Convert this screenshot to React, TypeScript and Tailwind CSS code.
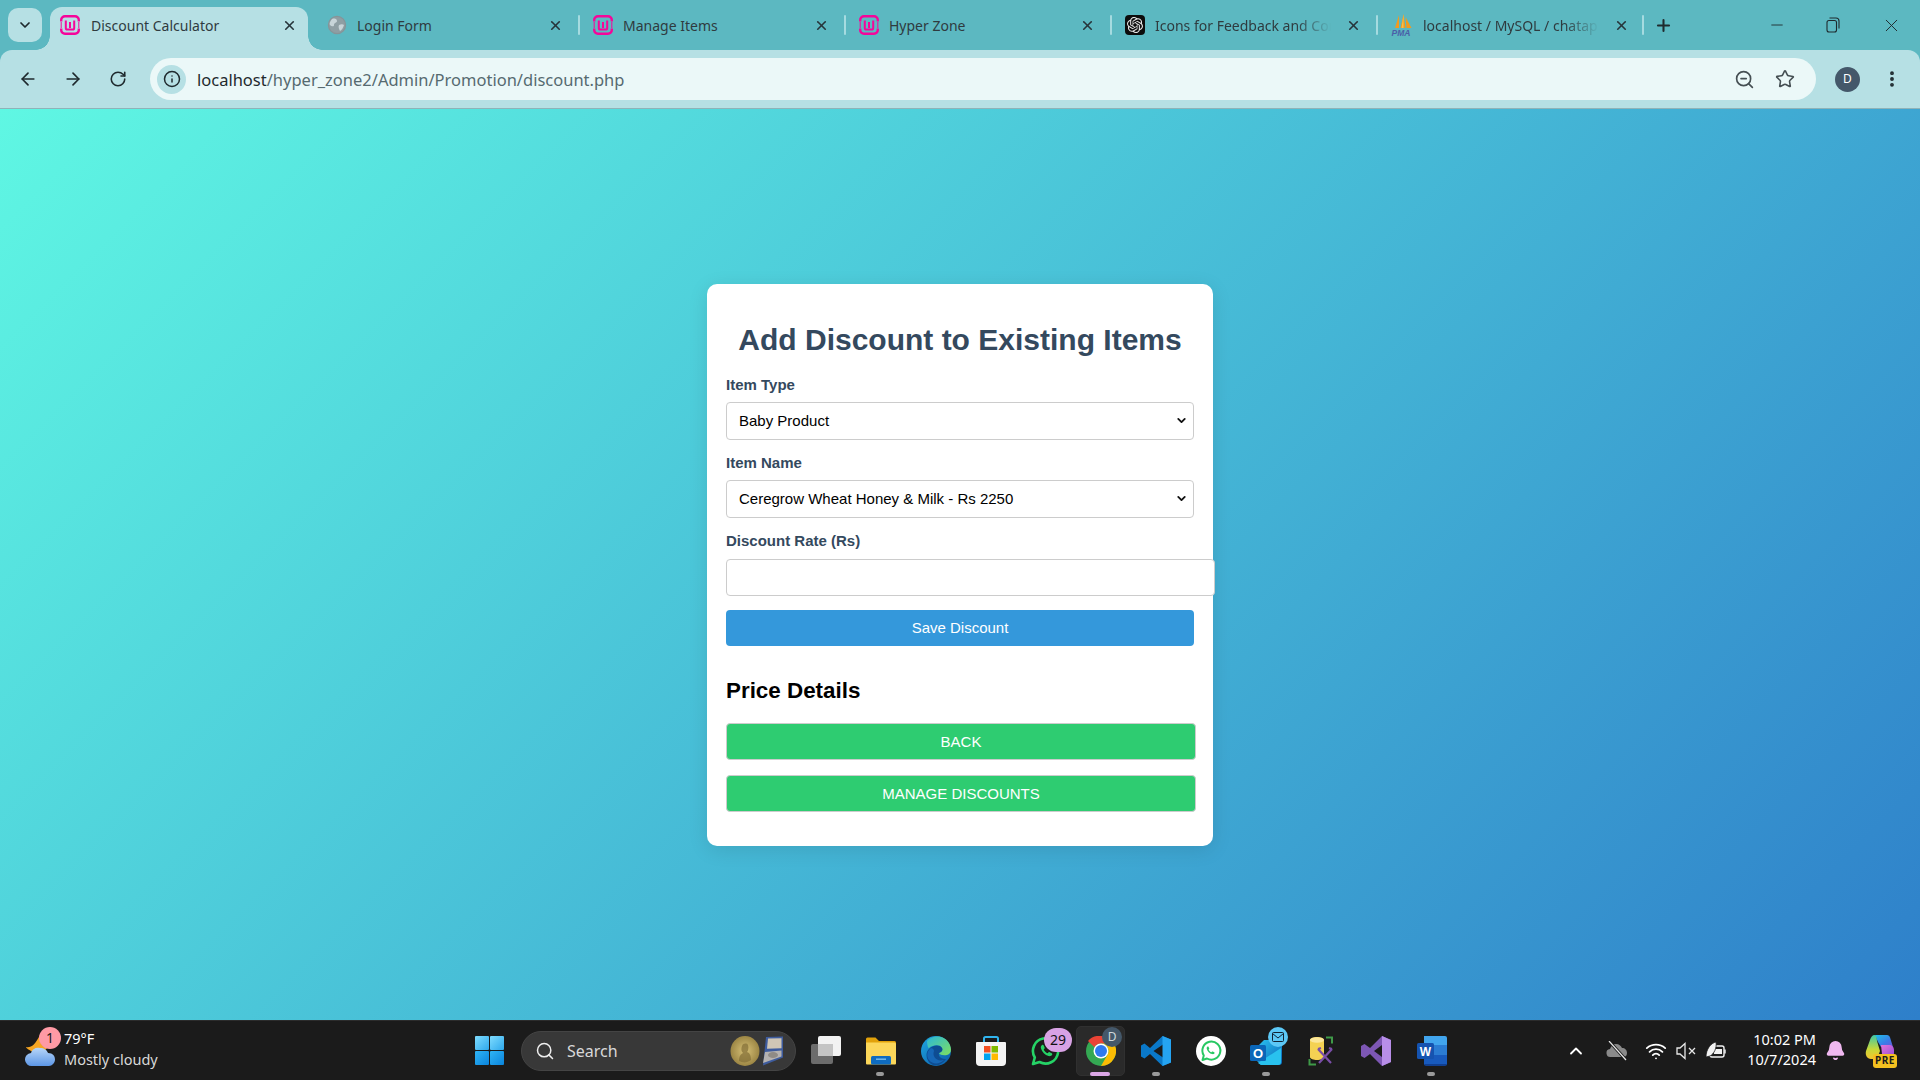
import React from "react";
import { ArrowLeft, ArrowRight, RotateCw, Info, ZoomOut, Star, EllipsisVertical, ChevronDown, ChevronUp, X, Plus, Minus, Search, Wifi, Bell } from "lucide-react";
import { SiOpenai } from "react-icons/si";

const ui = "font-['Noto_Sans','Open_Sans',sans-serif]";

function Wamp() {
  return (
    <svg width="20" height="20" viewBox="0 0 20 20" fill="none" className="shrink-0">
      <path d="M1.2 6.5V5a3.8 3.8 0 0 1 3.8-3.8h10A3.8 3.8 0 0 1 18.8 5v1.5M1.2 13.5V15A3.8 3.8 0 0 0 5 18.8h10a3.8 3.8 0 0 0 3.8-3.8v-1.5" stroke="#f5069a" strokeWidth="2.4" />
      <path d="M1.2 7v6M18.8 7v6" stroke="#f5069a" strokeWidth="1" />
      <path d="M5.8 5.5v7.5a1.6 1.6 0 0 0 1.6 1.6h5.2a1.6 1.6 0 0 0 1.6-1.6V5.5M10 7v6" stroke="#f5069a" strokeWidth="2" />
    </svg>
  );
}

function Globe() {
  return (
    <svg width="20" height="20" viewBox="0 0 20 20" className="shrink-0">
      <circle cx="10" cy="10" r="8.6" fill="#8f9ea3" stroke="#869498" strokeWidth="1.2" />
      <path d="M5 4c3-1 5 0 5 2s-3 1.500-3 4-3 1-4 0 0-4 2-6zM12 10c2-1 4-1 5 0-1 3-2 5-4 6-1-2-2-4-1-6z" fill="#c8d4d8" />
    </svg>
  );
}

function Pma() {
  return (
    <svg width="22" height="24" viewBox="0 0 22 24" className="shrink-0">
      <path d="M4 15 8 2v13zM9.500 15 12.500 1l2 14zM15.500 15 14.500 4l6 11z" fill="#f39a1e" />
      <path d="M10.500 15 12.500 1v14z" fill="#f7c04a" />
      <text x="0.500" y="22.500" fontSize="8.500" fontWeight="700" fontStyle="italic" fill="#4a5fa8" fontFamily="Liberation Sans">PMA</text>
    </svg>
  );
}

function OpenAi() {
  return (
    <span className="flex h-[20px] w-[20px] shrink-0 items-center justify-center rounded-[4px] bg-[#0c0c0c]">
      <SiOpenai size={16} color="#e8e8e8" />
    </span>
  );
}

function Tab({ icon, title, active, fade, sep = true }: { icon: React.ReactNode; title: string; active?: boolean; fade?: boolean; sep?: boolean }) {
  return (
    <div className={`relative flex h-[43px] shrink-0 items-center pb-[7px] ${active ? "mr-[8px] w-[258px] rounded-t-[12px] bg-[#b6e0e4] pl-[10px]" : "w-[266px] pl-[11px]"}`}>
      {active && <span className="absolute bottom-0 right-full h-[14px] w-[14px] bg-[radial-gradient(circle_at_0_0,transparent_13.500px,#b6e0e4_14px)]" />}
      {active && <span className="absolute bottom-0 left-full h-[14px] w-[14px] bg-[radial-gradient(circle_at_100%_0,transparent_13.500px,#b6e0e4_14px)]" />}
      {icon}
      <span className={`w-[176px] overflow-hidden whitespace-nowrap text-[14px] text-[#2f3b3f] ${active ? "ml-[11px]" : "ml-[10px]"} ${ui} ${fade ? "[mask-image:linear-gradient(to_right,black_80%,transparent)]" : ""}`}>{title}</span>
      <span className="ml-[14px] flex h-[16px] w-[16px] items-center justify-center">
        <X size={15} strokeWidth={2.6} color="#27343a" />
      </span>
      {sep && !active && <span className="absolute left-[262px] top-[8px] h-[20px] w-[2px] rounded bg-[#a5dbe0]" />}
    </div>
  );
}

function Tabs() {
  return (
    <div className="flex h-[50px] items-end bg-[#5cb8c1] pl-[8px]">
      <div className="mb-[8px] mr-[8px] flex h-[34px] w-[34px] shrink-0 items-center justify-center rounded-[10px] bg-[#b6e0e4]">
        <ChevronDown size={16} strokeWidth={2.6} color="#1f2a2e" />
      </div>
      <Tab active icon={<Wamp />} title="Discount Calculator" />
      <Tab icon={<Globe />} title="Login Form" />
      <Tab icon={<Wamp />} title="Manage Items" />
      <Tab icon={<Wamp />} title="Hyper Zone" />
      <Tab icon={<OpenAi />} fade title="Icons for Feedback and Comments" />
      <Tab icon={<Pma />} fade title="localhost / MySQL / chatapp" />
      <div className="flex h-[50px] w-[34px] shrink-0 items-center justify-center">
        <Plus size={19} strokeWidth={2.6} color="#1f2a2e" />
      </div>
      <div className="flex-1" />
      <div className="flex h-[50px] items-center pr-[1px]">
        <div className="flex w-[56px] justify-center"><Minus size={18} strokeWidth={1.2} color="#1f2a2e" /></div>
        <div className="mr-[2px] flex w-[56px] justify-center">
          <svg width="14" height="16" viewBox="0 0 14 16" fill="none" stroke="#1f2a2e" strokeWidth="1.100"><rect x="1" y="3.500" width="9.500" height="11.500" rx="2" /><path d="M3.500 1h6.500a3 3 0 0 1 3 3v7.500" /></svg>
        </div>
        <div className="flex w-[56px] justify-center"><X size={21} strokeWidth={1.1} color="#1f2a2e" /></div>
      </div>
    </div>
  );
}

function Toolbar() {
  const nav = "flex w-[45px] items-center justify-center";
  return (
    <div className="bg-[#5cb8c1]">
      <div className="flex h-[59px] items-center rounded-t-[12px] border-b border-[#8fb3b8] bg-[#b6e0e4] pl-[5px]">
        <div className={nav}><ArrowLeft size={20} strokeWidth={2} color="#1f2a2e" /></div>
        <div className={nav}><ArrowRight size={20} strokeWidth={2} color="#1f2a2e" /></div>
        <div className={nav}><RotateCw size={18} strokeWidth={2.1} color="#1f2a2e" /></div>
        <div className="ml-[10px] flex h-[42px] flex-1 items-center rounded-full bg-[#ebf8f8] pl-[7px] pr-[11px]">
          <span className="flex h-[29px] w-[29px] items-center justify-center rounded-full bg-[#b6e0e4]"><Info size={18} strokeWidth={2} color="#1f2a2e" /></span>
          <span className={`ml-[11px] whitespace-nowrap pt-[2px] text-[16.500px] text-[#1f2a2e] ${ui}`}>localhost<span className="text-[#566a70]">/hyper_zone2/Admin/Promotion/discount.php</span></span>
          <span className="flex-1" />
          <span className="mr-[1px] flex w-[40px] justify-center"><ZoomOut size={21} strokeWidth={1.9} color="#454f53" /></span>
          <span className="flex w-[40px] justify-center"><Star size={20} strokeWidth={1.9} color="#454f53" /></span>
        </div>
        <div className="flex w-[104px] items-center pl-[19px]">
          <span className={`flex h-[25px] w-[25px] items-center justify-center rounded-full bg-[#44586a] text-[12px] text-white ${ui}`}>D</span>
          <span className="ml-[17px] flex w-[30px] justify-center"><EllipsisVertical size={20} strokeWidth={2.6} color="#1f2a2e" /></span>
        </div>
      </div>
    </div>
  );
}

const field = "block rounded-[4px] border border-[#ccc] bg-white text-[15px] text-black";
const label = "block text-[15px] font-bold leading-[16px] text-[#34495e]";

function Select({ children }: { children: React.ReactNode }) {
  return (
    <div className="relative w-[468px]">
      <select className={`${field} h-[38px] w-full appearance-none pl-[12px] pr-[24px]`}>{children}</select>
      <ChevronDown size={13} strokeWidth={3.4} color="#111" className="pointer-events-none absolute right-[6px] top-[12px]" />
    </div>
  );
}

function Card() {
  return (
    <div className="w-[506px] rounded-[10px] bg-white px-[19px] pb-[34px] pt-[37px] font-['Liberation_Sans',Arial,sans-serif] shadow-[0_4px_20px_rgba(0,0,0,0.1)]">
      <h1 className="mb-[19px] whitespace-nowrap text-center text-[30px] font-bold leading-[37px] text-[#34495e]">Add Discount to Existing Items</h1>
      <label className={`${label} mb-[9px]`}>Item Type</label>
      <Select>
        <option>Baby Product</option>
      </Select>
      <label className={`${label} mb-[9px] mt-[15px]`}>Item Name</label>
      <Select>
        <option>Ceregrow Wheat Honey &amp; Milk - Rs 2250</option>
      </Select>
      <label className={`${label} mb-[10px] mt-[15px]`}>Discount Rate (Rs)</label>
      <input type="text" className={`${field} h-[37px] w-[489px] px-[10px]`} />
      <button className="mt-[14px] block h-[36px] w-[468px] rounded-[4px] bg-[#3498db] pt-[1px] text-[15px] text-white">Save Discount</button>
      <h2 className="mb-[18px] mt-[31px] text-[22.400px] font-bold leading-[28px] text-black">Price Details</h2>
      <button className="block h-[37px] w-[470px] rounded-[4px] border border-[#ccc] bg-[#2ecc71] pt-[2px] text-[15px] text-white">BACK</button>
      <button className="mt-[15px] block h-[37px] w-[470px] rounded-[4px] border border-[#ccc] bg-[#2ecc71] pt-[2px] text-[15px] text-white">MANAGE DISCOUNTS</button>
    </div>
  );
}

function Cell({ children, dot, active }: { children: React.ReactNode; dot?: boolean; active?: boolean }) {
  return (
    <div className="relative flex h-[60px] w-[55.100px] shrink-0 items-center justify-center">
      {active && <span className="absolute left-[3px] top-[5px] h-[50px] w-[49px] rounded-[5px] border border-[#303030] bg-[#2a2a2a]" />}
      <span className="relative flex">{children}</span>
      {dot && <span className="absolute bottom-[5px] left-[23px] h-[4px] w-[8px] rounded-full bg-[#9a9a9a]" />}
      {active && <span className="absolute bottom-[5px] left-[17px] h-[4px] w-[20px] rounded-full bg-[#dba6e6]" />}
    </div>
  );
}

function Badge({ children, className }: { children: React.ReactNode; className: string }) {
  return <span className={`absolute flex items-center justify-center rounded-full ${ui} ${className}`}>{children}</span>;
}

function WinLogo() {
  return (
    <svg width="29" height="29" viewBox="0 0 29 29" className="shrink-0">
      <defs>
        <linearGradient id="w1" x1="0" y1="0" x2="1" y2="1"><stop offset="0" stopColor="#7fdcff" /><stop offset="1" stopColor="#2ea8ec" /></linearGradient>
        <linearGradient id="w2" x1="0" y1="0" x2="1" y2="1"><stop offset="0" stopColor="#2fb4f5" /><stop offset="1" stopColor="#0a84dc" /></linearGradient>
      </defs>
      <rect x="0" y="0" width="14" height="14" rx="1" fill="url(#w1)" />
      <rect x="15" y="0" width="14" height="14" rx="1" fill="url(#w1)" />
      <rect x="0" y="15" width="14" height="14" rx="1" fill="url(#w2)" />
      <rect x="15" y="15" width="14" height="14" rx="1" fill="url(#w2)" />
    </svg>
  );
}

function Medal() {
  return (
    <svg width="58" height="32" viewBox="0 0 58 32">
      <defs><radialGradient id="gold"><stop offset="0" stopColor="#d8c278" /><stop offset="1" stopColor="#9c8644" /></radialGradient></defs>
      <g transform="translate(2 0)">
        <ellipse cx="15" cy="16" rx="14.500" ry="15" fill="url(#gold)" />
        <path d="M9 26c0-5 2-7 4-8-2-2-2-4-1-7 1-3 5-3 6-1 1 3 0 6-1 7 3 1 4 4 4 8-4 3-8 3-12 1z" fill="#85713a" opacity=".75" />
      </g>
      <path d="M38 2l17-0.500 0 21-20 8z" fill="#3e5c9e" />
      <path d="M40 3.500l13.500-.3 0 10-14.500.5z" fill="#cfc6b6" />
      <path d="M37 17l16.500-1.500v6L35 28z" fill="#b5b2b0" />
      <ellipse cx="45" cy="20" rx="5" ry="3" fill="#8f8b86" />
    </svg>
  );
}

function TaskView() {
  return (
    <svg width="30" height="30" viewBox="0 0 30 30">
      <rect x="7" y="0" width="23" height="20" rx="2" fill="#f2f2f2" />
      <rect x="0" y="8" width="22" height="20" rx="2" fill="#7a7a7a" fillOpacity=".85" />
      <rect x="7" y="8" width="15" height="12" fill="#c4c4c4" />
    </svg>
  );
}

function Folder() {
  return (
    <svg width="30" height="30" viewBox="0 0 30 30">
      <path d="M0 3a1.500 1.500 0 0 1 1.500-1.500h8L13 5h15.500A1.500 1.500 0 0 1 30 6.500V10H0z" fill="#e2a20a" />
      <path d="M0 6.500h28.500A1.500 1.500 0 0 1 30 8v19.500a1 1 0 0 1-1 1H1a1 1 0 0 1-1-1z" fill="#fcd75a" />
      <rect x="5" y="20" width="20" height="8.500" rx="1.500" fill="#0f6cc0" />
      <rect x="10" y="22.500" width="10" height="1.400" fill="#7cc0ee" />
    </svg>
  );
}

function Edge() {
  return (
    <svg width="30" height="30" viewBox="0 0 30 30">
      <defs>
        <linearGradient id="e1" x1="0" y1="0" x2="1" y2="1"><stop offset="0" stopColor="#1fa6e0" /><stop offset="1" stopColor="#0a5aa8" /></linearGradient>
        <linearGradient id="e2" x1="0" y1="0" x2="1" y2="1"><stop offset="0" stopColor="#2bb8d8" /><stop offset="1" stopColor="#7fe05e" /></linearGradient>
      </defs>
      <circle cx="15" cy="15" r="15" fill="url(#e1)" />
      <path d="M6 5C11-1 24-2 29 9c2 5 1 9-3 10-4 .5-7 0-8-2 3-1 4-3 3-5-2-4-10-3-13 0-1 .5-2-4-2-7z" fill="url(#e2)" />
      <path d="M8 13c3-4 11-5 13-1 1 2 0 4-3 5-1 3 2 6 7 6-4 6-11 8-15 5-5-4-6-11-2-15z" fill="#0e4d92" />
      <path d="M13 15c-2 5 2 11 10 9-5 5-12 4-15 0-3-4-2-9 2-12 1 0 3 1 3 3z" fill="#1667b6" />
    </svg>
  );
}

function Store() {
  return (
    <svg width="30" height="32" viewBox="0 0 30 32">
      <path d="M8 8V3.500A1.500 1.500 0 0 1 9.500 2h11A1.500 1.500 0 0 1 22 3.500V8" fill="none" stroke="#30b4ee" strokeWidth="2" />
      <path d="M1 7h28a1 1 0 0 1 1 1v19a4 4 0 0 1-4 4H4a4 4 0 0 1-4-4V8a1 1 0 0 1 1-1z" fill="#f4f4f4" />
      <rect x="8" y="11" width="6.500" height="6.500" fill="#f25022" />
      <rect x="15.500" y="11" width="6.500" height="6.500" fill="#7fba00" />
      <rect x="8" y="18.500" width="6.500" height="6.500" fill="#00a4ef" />
      <rect x="15.500" y="18.500" width="6.500" height="6.500" fill="#ffb900" />
    </svg>
  );
}

const waPhone = "M11 9c-1 .8-1.500 2-1 3.500 1 3.500 4 6.500 7.500 7.500 1.500.4 2.800 0 3.500-1 .5-.8.3-1.500-.3-1.800l-2-1c-.5-.2-1-.1-1.300.3l-.7.8c-1.800-.7-3.200-2-4-3.800l.7-.8c.3-.3.4-.8.200-1.200l-1-2.200C12.300 8.600 11.600 8.500 11 9z";

function WaGreen() {
  return (
    <svg width="30" height="30" viewBox="0 0 30 30">
      <path d="M2 28l1.800-6.500A12.600 12.600 0 1 1 8.500 26z" fill="none" stroke="#25d366" strokeWidth="2.600" strokeLinejoin="round" />
      <path d={waPhone} fill="#25d366" />
    </svg>
  );
}

function WaWhite() {
  return (
    <svg width="30" height="30" viewBox="0 0 30 30">
      <circle cx="15" cy="15" r="15" fill="#fff" />
      <path d="M6.500 24l1.300-4.500A9 9 0 1 1 11 22.500z" fill="none" stroke="#27c862" strokeWidth="2" strokeLinejoin="round" />
      <path d="M11.500 10.500c-.7.500-1 1.400-.7 2.400.7 2.500 2.800 4.500 5.200 5.200 1 .3 2 0 2.400-.7.400-.5.200-1-.2-1.200l-1.400-.7c-.3-.2-.7-.1-.9.200l-.5.600c-1.200-.5-2.200-1.400-2.800-2.600l.5-.6c.2-.2.300-.5.100-.8l-.7-1.500c-.2-.4-.6-.5-1-.3z" fill="#27c862" />
    </svg>
  );
}

function Chrome() {
  return (
    <svg width="30" height="30" viewBox="0 0 30 30">
      <circle cx="15" cy="15" r="15" fill="#34a853" />
      <path d="M15 0a15 15 0 0 1 13 7.500H15a7.500 7.500 0 0 0-6.500 3.750L2 4.900A15 15 0 0 1 15 0z" fill="#ea4335" />
      <path d="M28 7.500A15 15 0 0 1 15 30l6.500-11.250A7.500 7.500 0 0 0 15 7.500z" fill="#fbbc04" />
      <circle cx="15" cy="15" r="7.500" fill="#fff" />
      <circle cx="15" cy="15" r="6" fill="#2f7af0" />
    </svg>
  );
}

function VsCode() {
  return (
    <svg width="30" height="30" viewBox="0 0 30 30">
      <path d="M21.500 0 9 12 3.500 7.500 0 9.500v11l3.500 2L9 18l12.500 12 8.500-3.500v-23zM22 8.500v13L12.500 15z" fill="#0a78c8" fillRule="evenodd" />
      <path d="M21.500 0 30 3.500v23L21.500 30z" fill="#25a4f2" />
    </svg>
  );
}

function Outlook() {
  return (
    <span className="relative block h-[30px] w-[32px]">
      <svg width="32" height="30" viewBox="0 0 32 30">
        <defs><linearGradient id="ol" x1="0" y1="0" x2="1" y2="1"><stop offset="0" stopColor="#2bc3f0" /><stop offset="1" stopColor="#0c66b8" /></linearGradient></defs>
        <path d="M14 4h18v22a3 3 0 0 1-3 3H11l-4-4V11z" fill="url(#ol)" />
        <path d="M8 27 31 12v14a3 3 0 0 1-3 3H11z" fill="#29c2ee" />
        <rect x="0" y="9" width="16" height="16" rx="1.500" fill="#0a66b8" />
        <text x="8" y="22" textAnchor="middle" fontSize="13" fontWeight="700" fill="#fff" fontFamily="Liberation Sans">O</text>
      </svg>
      <span className="absolute -right-[6px] -top-[9px] flex h-[20px] w-[20px] items-center justify-center rounded-full bg-[#5cc8f6]">
        <svg width="12" height="10" viewBox="0 0 12 10" fill="none" stroke="#123" strokeWidth="1"><rect x=".5" y=".5" width="11" height="9" rx="1" /><path d="M.5 1.500 6 6l5.500-4.500" /></svg>
      </span>
    </span>
  );
}

function DbTool() {
  return (
    <svg width="26" height="30" viewBox="0 0 26 30">
      <path d="M2 4c0-4 14-4 14 0v17c0 4-14 4-14 0z" fill="#f4d253" />
      <ellipse cx="9" cy="4" rx="7" ry="2.800" fill="#fbe79a" />
      <path d="M18 1.500h6v6M8 28.500H1.500v-5.500" fill="none" stroke="#3f9a48" strokeWidth="2" />
      <path d="M10 13 23 27M24 13 11 27M10 13l3-1M24 13l-3-1" stroke="#7a4ea8" strokeWidth="2.200" fill="none" />
    </svg>
  );
}

function Vs() {
  return (
    <svg width="30" height="30" viewBox="0 0 30 30">
      <path d="M21 0 9 12 3.500 8 0 10v10l3.500 2L9 18l12 12 9-4V4zM21 9v12l-8-6z" fill="#7d57b4" fillRule="evenodd" />
      <path d="M21 0l9 4v22l-9 4z" fill="#b88ee8" />
    </svg>
  );
}

function Word() {
  return (
    <svg width="30" height="30" viewBox="0 0 30 30">
      <path d="M7 0h21a2 2 0 0 1 2 2v7H7z" fill="#41a5ee" />
      <rect x="7" y="9" width="23" height="10" fill="#2b7cd3" />
      <rect x="7" y="19" width="23" height="10" fill="#185abd" />
      <path d="M7 28h23a2 2 0 0 1-2 2H9a2 2 0 0 1-2-2z" fill="#103f91" />
      <rect x="0" y="7" width="17" height="16" rx="1.500" fill="#1553b0" />
      <text x="8.500" y="20" textAnchor="middle" fontSize="12" fontWeight="700" fill="#fff" fontFamily="Liberation Sans">W</text>
    </svg>
  );
}

function Weather() {
  return (
    <div className="flex h-[60px] w-[475px] shrink-0 items-center pl-[25px]">
      <span className="relative block h-[36px] w-[39px]">
        <svg width="32" height="36" viewBox="0 0 32 36" className="absolute left-0 top-0">
          <defs><linearGradient id="cl" x1="0" y1="0" x2="0" y2="1"><stop offset="0" stopColor="#b8d6f8" /><stop offset="1" stopColor="#5c96e6" /></linearGradient></defs>
          <path d="M15 2c-1 6 1 11 7 13-3 5-10 6-14 4S1 15 1 14c5 1 9-2 14-12z" fill="#f6a623" />
          <path d="M7 33a6.500 6.500 0 0 1-1-13c1-4 5-6 9-5 4 0 7 2 8 5 5 0 7 3 7 6.500S27 33 24 33z" fill="url(#cl)" />
        </svg>
        <Badge className="left-[14px] top-[-6px] h-[22px] w-[22px] bg-[#ff9aa5] text-[14px] text-[#1a1a1a]">1</Badge>
      </span>
      <div className={`mb-[4px] text-[14.500px] leading-[21px] ${ui}`}>
        <div className="text-white">79°F</div>
        <div className="text-[#d8d8d8]">Mostly cloudy</div>
      </div>
    </div>
  );
}

function Copilot() {
  return (
    <span className="relative block h-[34px] w-[30px]">
      <svg width="30" height="28" viewBox="0 0 30 28">
        <defs>
          <linearGradient id="c1" x1="0" y1="0" x2="1" y2="1"><stop offset="0" stopColor="#1ec0e8" /><stop offset=".6" stopColor="#3a7ce8" /><stop offset="1" stopColor="#6a58d8" /></linearGradient>
          <linearGradient id="c2" x1="0" y1="0" x2="1" y2="1"><stop offset="0" stopColor="#f07ad8" /><stop offset="1" stopColor="#8a48d8" /></linearGradient>
          <linearGradient id="c3" x1="0" y1="0" x2="0" y2="1"><stop offset="0" stopColor="#3ec8a8" /><stop offset=".6" stopColor="#c8d838" /><stop offset="1" stopColor="#f4c430" /></linearGradient>
        </defs>
        <path d="M10 1h12c1.500 0 2.500 1 3 2.500L28 13H16L13 8z" fill="url(#c1)" />
        <path d="M10 1C7 1 6 3 5 6L1 17c-1 4 1 8 5 8h6l3-8-3-10c0-3-1-6-2-6z" fill="url(#c3)" />
        <path d="M16 11h8c3 0 5 2 5 5v3c0 4-2 7-5 7h-12c3-1 4-3 5-6z" fill="url(#c2)" />
      </svg>
      <span className={`absolute -right-[2px] top-[20px] flex h-[14px] w-[24px] items-center justify-center rounded-[3px] bg-[#f4c020] text-[10px] font-bold tracking-[0.5px] text-[#1a1a1a] ${ui}`}>PRE</span>
    </span>
  );
}

function Tray() {
  return (
    <div className="flex h-[60px] shrink-0 items-center pr-[14px]">
      <div className="flex w-[40px] justify-center"><ChevronUp size={20} strokeWidth={2.2} color="#fff" /></div>
      <div className="mr-[4px] flex w-[41px] justify-center">
        <svg width="22" height="20" viewBox="0 0 22 20">
          <path d="M5 16a4 4 0 0 1-1-8c1-3 3-5 6-5s5 2 6 4c3 0 5 2 5 5s-2 4-4 4z" fill="#8a8a8a" />
          <path d="M3 0l17 19" stroke="#1b1b1b" strokeWidth="3" />
          <path d="M3 0l17 19" stroke="#e8e8e8" strokeWidth="1.200" />
        </svg>
      </div>
      <div className="flex w-[30px] justify-center"><Wifi size={22} strokeWidth={2} color="#fff" /></div>
      <div className="flex w-[29px] justify-center">
        <svg width="20" height="18" viewBox="0 0 20 18" fill="none" stroke="#e8e8e8" strokeWidth="1.300"><path d="M1 6v6h3l5 4.500V1.500L4 6z" /><path d="M13 6l6 6M19 6l-6 6" /></svg>
      </div>
      <div className="flex w-[32px] justify-center">
        <svg width="22" height="20" viewBox="0 0 22 20" fill="none" stroke="#f2f2f2" strokeWidth="1.400"><rect x="5" y="5" width="14" height="11" rx="2" /><path d="M20 8.500v4" /><rect x="9" y="8" width="8" height="5" fill="#f2f2f2" stroke="none" /><path d="M1 16C1 8 6 2 11 1c1 6-2 12-6 14z" fill="#f2f2f2" stroke="#1b1b1b" strokeWidth=".8" /></svg>
      </div>
      <div className={`mb-[4px] w-[84px] text-right text-[14.500px] leading-[20px] text-white ${ui}`}>
        <div>10:02 PM</div>
        <div>10/7/2024</div>
      </div>
      <div className="flex w-[38px] justify-center"><Bell size={21} fill="#f0b8f0" color="#f0b8f0" /></div>
      <div className="flex w-[52px] justify-center"><Copilot /></div>
    </div>
  );
}

function Taskbar() {
  return (
    <div className="flex h-[60px] items-center border-t border-[#2c2c2c] bg-[#1b1b1b]">
      <Weather />
      <div className="flex w-[46px] shrink-0"><WinLogo /></div>
      <div className="flex h-[40px] w-[275px] shrink-0 items-center rounded-full border border-[#444] bg-[#383838] pl-[13px]">
        <Search size={20} strokeWidth={1.8} color="#eee" />
        <span className={`ml-[12px] text-[16px] text-[#d8d8d8] ${ui}`}>Search</span>
        <span className="flex-1" />
        <span className="mr-[9px]"><Medal /></span>
      </div>
      <div className="ml-[2px] flex">
        <Cell><TaskView /></Cell>
        <Cell dot><Folder /></Cell>
        <Cell><Edge /></Cell>
        <Cell><Store /></Cell>
        <Cell>
          <WaGreen />
          <Badge className="right-[-11px] top-[-8px] h-[24px] w-[28px] bg-[#d8a2e4] text-[14px] text-[#111]">29</Badge>
        </Cell>
        <Cell active>
          <Chrome />
          <Badge className="right-[-6px] top-[-9px] h-[20px] w-[20px] bg-[#44586a] text-[12px] text-[#cfd8dc]">D</Badge>
        </Cell>
        <Cell dot><VsCode /></Cell>
        <Cell><WaWhite /></Cell>
        <Cell dot><Outlook /></Cell>
        <Cell><DbTool /></Cell>
        <Cell><Vs /></Cell>
        <Cell dot><Word /></Cell>
      </div>
      <div className="flex-1" />
      <Tray />
    </div>
  );
}

export default function App() {
  return (
    <div className="flex h-[1080px] w-[1920px] flex-col overflow-hidden">
      <Tabs />
      <Toolbar />
      <main className="flex flex-1 items-center justify-center bg-[linear-gradient(135deg,#5ff7e3,#2e7fca)] pt-[1px]">
        <Card />
      </main>
      <Taskbar />
    </div>
  );
}
